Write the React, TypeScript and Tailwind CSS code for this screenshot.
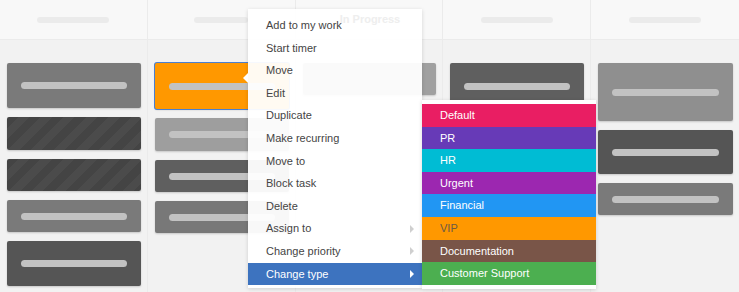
import { ReactNode } from "react";

const stripes =
    "bg-[repeating-linear-gradient(135deg,#444444_0px,#444444_8px,#4b4b4b_8px,#4b4b4b_16px)]";

type Card = { h: string; bg: string; pill?: boolean; extra?: string };

const columns: { header: "pill" | "text"; pillW?: string; cards: Card[] }[] = [
    {
        header: "pill",
        pillW: "w-[72px]",
        cards: [
            { h: "h-[45px]", bg: "bg-[#7a7a7a]", pill: true },
            { h: "h-[33px]", bg: stripes },
            { h: "h-[32px]", bg: stripes },
            { h: "h-[32px]", bg: "bg-[#7a7a7a]", pill: true },
            { h: "h-[45px]", bg: "bg-[#555555]", pill: true },
        ],
    },
    {
        header: "pill",
        pillW: "w-[54px]",
        cards: [
            { h: "h-[46px]", bg: "bg-[#ff9800]", pill: true, extra: "ring-1 ring-[#4a7fd0]" },
            { h: "h-[33px]", bg: "bg-[#9e9e9e]", pill: true },
            { h: "h-[32px]", bg: "bg-[#5f5f5f]", pill: true },
            { h: "h-[32px]", bg: "bg-[#787878]", pill: true },
        ],
    },
    {
        header: "text",
        cards: [{ h: "h-[32px]", bg: "bg-[#a0a0a0]" }],
    },
    {
        header: "pill",
        pillW: "w-[72px]",
        cards: [{ h: "h-[46px]", bg: "bg-[#5f5f5f]", pill: true }],
    },
    {
        header: "pill",
        pillW: "w-[72px]",
        cards: [
            { h: "h-[58px]", bg: "bg-[#8f8f8f]", pill: true },
            { h: "h-[44px]", bg: "bg-[#555555]", pill: true },
            { h: "h-[32px]", bg: "bg-[#7a7a7a]", pill: true },
        ],
    },
];

const menuItems = [
    "Add to my work",
    "Start timer",
    "Move",
    "Edit",
    "Duplicate",
    "Make recurring",
    "Move to",
    "Block task",
    "Delete",
    "Assign to",
    "Change priority",
    "Change type",
];

const withArrow = ["Assign to", "Change priority", "Change type"];

const types = [
    { label: "Default", bg: "bg-[#e91e63]", text: "text-white" },
    { label: "PR", bg: "bg-[#673ab7]", text: "text-white" },
    { label: "HR", bg: "bg-[#00bcd4]", text: "text-white" },
    { label: "Urgent", bg: "bg-[#9c27b0]", text: "text-white" },
    { label: "Financial", bg: "bg-[#2196f3]", text: "text-white" },
    { label: "VIP", bg: "bg-[#ff9800]", text: "text-[#6b5a45]" },
    { label: "Documentation", bg: "bg-[#795548]", text: "text-white" },
    { label: "Customer Support", bg: "bg-[#4caf50]", text: "text-white" },
];

function Arrow({ active }: { active: boolean }) {
    return (
        <span
            className={`ml-auto mr-[8px] h-0 w-0 border-y-[4px] border-l-[4px] border-y-transparent ${
                active ? "border-l-white" : "border-l-[#cfcfcf]"
            }`}
        />
    );
}

function Column({ children, header }: { children: ReactNode; header: ReactNode }) {
    return (
        <div className="flex flex-col border-r border-[#ebebeb] last:border-r-0">
            <div className="flex h-[40px] items-center justify-center border-b border-[#ebebeb] bg-[#f8f8f8]">
                {header}
            </div>
            <div className="flex flex-col gap-[9px] pl-[7px] pr-[6px] pt-[23px]">{children}</div>
        </div>
    );
}

export default function App() {
    return (
        <div className="relative h-[292px] w-[739px] overflow-hidden bg-[#f2f2f2] font-['Liberation_Sans',Arial,sans-serif]">
            <div className="grid h-full grid-cols-5">
                {columns.map((col, i) => (
                    <Column
                        key={i}
                        header={
                            col.header === "pill" ? (
                                <span className={`h-[6px] ${col.pillW} rounded-full bg-[#ebebeb]`} />
                            ) : (
                                // faintly shows through the open menu
                                <span className="relative z-10 ml-[2px] text-[11px] font-bold text-[#eeeeee]">In Progress</span>
                            )
                        }
                    >
                        {col.cards.map((c, j) => (
                            <div
                                key={j}
                                className={`flex ${c.h} items-center rounded-[2px] shadow-[0_1px_2px_rgba(0,0,0,0.18)] ${c.bg} ${c.extra ?? ""}`}
                            >
                                {c.pill && <span className="mx-[14px] h-[7px] flex-1 rounded-full bg-[#c2c2c2]" />}
                            </div>
                        ))}
                    </Column>
                ))}
            </div>

            {/* context menu */}
            <div className="absolute left-[248px] top-[9px] h-[279px] w-[174px] bg-white/95 pt-[5px] shadow-[0_1px_4px_rgba(0,0,0,0.15)]">
                <span className="absolute left-[-5px] top-[64px] h-0 w-0 border-y-[5px] border-r-[5px] border-y-transparent border-r-white" />
                {menuItems.map((item) => {
                    const active = item === "Change type";
                    return (
                        <div
                            key={item}
                            className={`flex h-[22.6px] items-center pl-[18px] text-[11px] ${
                                active ? "bg-[#3d73bf] text-white" : "text-[#444444]"
                            }`}
                        >
                            {item}
                            {withArrow.includes(item) && <Arrow active={active} />}
                        </div>
                    );
                })}
            </div>

            {/* type submenu */}
            <div className="absolute left-[422px] top-[100px] h-[189px] w-[174px] bg-white py-[4px] shadow-[0_1px_4px_rgba(0,0,0,0.15)]">
                {types.map((t) => (
                    <div
                        key={t.label}
                        className={`flex h-[22.6px] items-center pl-[18px] text-[11px] ${t.bg} ${t.text}`}
                    >
                        {t.label}
                    </div>
                ))}
            </div>
        </div>
    );
}
